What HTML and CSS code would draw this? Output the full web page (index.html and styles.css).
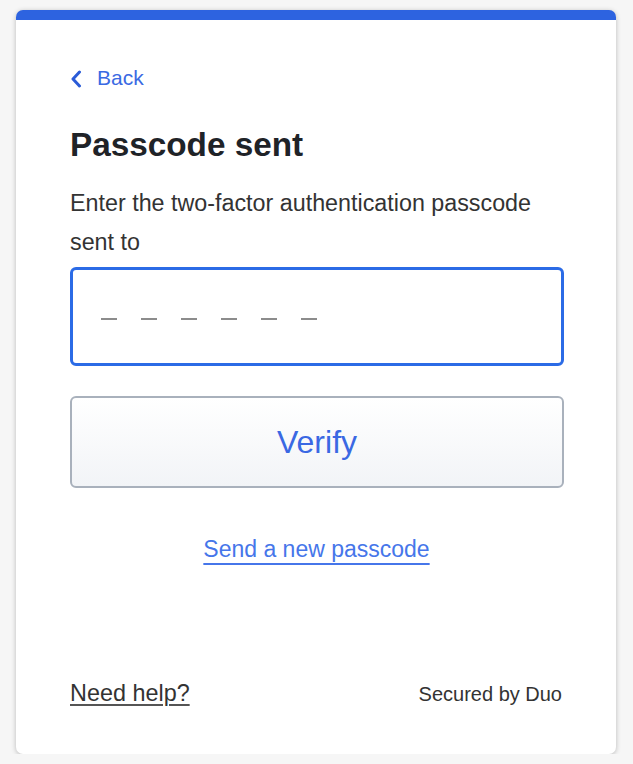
FILE: index.html
```html
<!DOCTYPE html>
<html lang="en">
<head>
<meta charset="utf-8">
<title>Passcode sent</title>
<link rel="stylesheet" href="styles.css">
</head>
<body>
<main class="card">
  <a class="back" href="#">
    <svg class="chev" width="12" height="18" viewBox="0 0 12 18" aria-hidden="true"><path d="M9.5 2 L3 9 L9.5 16" fill="none" stroke="#2a5bd7" stroke-width="3" stroke-linecap="round" stroke-linejoin="round"/></svg>
    <span>Back</span>
  </a>
  <h1 class="title">Passcode sent</h1>
  <p class="desc">Enter the two-factor authentication passcode sent to</p>
  <div class="code-input" role="textbox" aria-label="Passcode">
    <span class="dash"></span><span class="dash"></span><span class="dash"></span><span class="dash"></span><span class="dash"></span><span class="dash"></span>
  </div>
  <button class="verify" type="button">Verify</button>
  <div class="resend-row"><a class="resend" href="#">Send a new passcode</a></div>
  <footer class="footer">
    <a class="help" href="#">Need help?</a>
    <span class="secured">Secured by Duo</span>
  </footer>
</main>
</body>
</html>
```

FILE: styles.css
```css
html, body {
  margin: 0;
  padding: 0;
}
body {
  background: #f6f6f6;
  font-family: "Liberation Sans", Arial, sans-serif;
  color: #333;
  padding: 10px 0 0 16px;
}
.card {
  box-sizing: border-box;
  width: 600px;
  height: 744px;
  background: #fff;
  border-top: 10px solid #2d63e0;
  border-radius: 7px;
  box-shadow: 0 1px 5px rgba(0, 0, 0, 0.25);
  padding: 46px 53px 46px 54px;
  display: flex;
  flex-direction: column;
}
.back {
  display: flex;
  align-items: center;
  gap: 15px;
  height: 24px;
  font-size: 21px;
  line-height: 24px;
  color: #3a6ae3;
  text-decoration: none;
  align-self: flex-start;
}
.chev {
  display: block;
  margin-top: 1px;
}
.title {
  margin: 35px 0 0;
  font-size: 33.3px;
  line-height: 40px;
  font-weight: bold;
  color: #1f2328;
}
.desc {
  margin: 19px 0 0;
  font-size: 23.3px;
  line-height: 39px;
  color: #333;
  width: 475px;
}
.code-input {
  box-sizing: border-box;
  margin-top: 5px;
  width: 494px;
  height: 99px;
  border: 3px solid #2b6be6;
  border-radius: 6px;
  padding-left: 28px;
  display: flex;
  align-items: center;
  gap: 24px;
}
.dash {
  display: block;
  width: 16px;
  height: 2px;
  background: #8c8c8c;
  margin-top: 4px;
}
.verify {
  box-sizing: border-box;
  margin-top: 30px;
  width: 494px;
  height: 92px;
  border: 2px solid #a9b1bc;
  border-radius: 6px;
  background: linear-gradient(#ffffff, #f2f4f7);
  font-family: "Liberation Sans", Arial, sans-serif;
  font-size: 32px;
  color: #3a68e3;
  cursor: pointer;
}
.resend-row {
  margin-top: 47px;
  text-align: center;
  font-size: 23px;
  line-height: 28px;
}
.resend {
  color: #4676ea;
  text-decoration: underline;
  text-decoration-thickness: 2px;
  text-underline-offset: 6px;
}
.footer {
  margin-top: auto;
  display: flex;
  justify-content: space-between;
  align-items: baseline;
  line-height: 28px;
}
.help {
  font-size: 23.4px;
  color: #333;
  text-decoration: underline;
  text-decoration-color: #555;
  text-decoration-thickness: 2px;
  text-underline-offset: 3px;
}
.secured {
  font-size: 20px;
  color: #333;
  margin-right: 1px;
}
```
